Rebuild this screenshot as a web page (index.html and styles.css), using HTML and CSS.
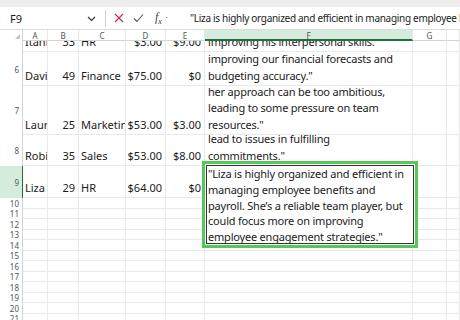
FILE: index.html
```html
<!DOCTYPE html>
<html lang="en">
<head>
    <meta charset="UTF-8">
    <title>Reviews - Sheet</title>
    <link rel="stylesheet" href="styles.css">
</head>
<body>
    <!-- formula bar -->
    <div class="formula-bar">
        <div class="name-box">
            <span>F9</span>
            <svg class="chev" width="9" height="6" viewBox="0 0 9 6"><path d="M1 1 L4.5 4.5 L8 1" fill="none" stroke="#333" stroke-width="1.2"/></svg>
        </div>
        <div class="divider"></div>
        <div class="bar-buttons">
            <svg width="10" height="10" viewBox="0 0 10 10"><path d="M1 1 L9 9 M9 1 L1 9" stroke="#c4314b" stroke-width="1.2"/></svg>
            <svg width="11" height="10" viewBox="0 0 11 10"><path d="M1 5.5 L4 8.5 L10 1.5" fill="none" stroke="#555" stroke-width="1.1"/></svg>
            <span class="fx"><i>f</i><sub>x</sub></span>
            <span class="fx-more">&#8901;</span>
        </div>
        <div class="formula">"Liza is highly organized and efficient in managing employee benefits and payroll. She’s a reliable team player, but could focus more on improving employee engagement strategies."</div>
    </div>

    <!-- sheet grid -->
    <div class="sheet">
        <div class="corner"></div><div class="col-head">A</div><div class="col-head">B</div><div class="col-head">C</div><div class="col-head">D</div><div class="col-head">E</div><div class="col-head active">F</div><div class="col-head">G</div><div class="col-head"></div>

        <div class="row-head"></div>
        <div class="cell"><span>Itani</span></div>
        <div class="cell num"><span>33</span></div>
        <div class="cell"><span>HR</span></div>
        <div class="cell num"><span>$3.00</span></div>
        <div class="cell num"><span>$9.00</span></div>
        <div class="cell wrap"><span>improving his interpersonal skills."</span></div>
        <div class="cell"></div><div class="cell"></div>

        <div class="row-head">6</div>
        <div class="cell"><span>Davi</span></div>
        <div class="cell num"><span>49</span></div>
        <div class="cell"><span>Finance</span></div>
        <div class="cell num"><span>$75.00</span></div>
        <div class="cell num"><span>$0</span></div>
        <div class="cell wrap"><span>improving our financial forecasts and<br>budgeting accuracy."</span></div>
        <div class="cell"></div><div class="cell"></div>

        <div class="row-head">7</div>
        <div class="cell"><span>Laur</span></div>
        <div class="cell num"><span>25</span></div>
        <div class="cell"><span>Marketing</span></div>
        <div class="cell num"><span>$53.00</span></div>
        <div class="cell num"><span>$3.00</span></div>
        <div class="cell wrap"><span>her approach can be too ambitious,<br>leading to some pressure on team<br>resources."</span></div>
        <div class="cell"></div><div class="cell"></div>

        <div class="row-head">8</div>
        <div class="cell"><span>Robi</span></div>
        <div class="cell num"><span>35</span></div>
        <div class="cell"><span>Sales</span></div>
        <div class="cell num"><span>$53.00</span></div>
        <div class="cell num"><span>$8.00</span></div>
        <div class="cell wrap"><span>lead to issues in fulfilling<br>commitments."</span></div>
        <div class="cell"></div><div class="cell"></div>

        <div class="row-head active">9</div>
        <div class="cell"><span>Liza</span></div>
        <div class="cell num"><span>29</span></div>
        <div class="cell"><span>HR</span></div>
        <div class="cell num"><span>$64.00</span></div>
        <div class="cell num"><span>$0</span></div>
        <div class="cell"></div>
        <div class="cell"></div><div class="cell"></div>

        <div class="row-head">10</div><div class="cell"></div><div class="cell"></div><div class="cell"></div><div class="cell"></div><div class="cell"></div><div class="cell"></div><div class="cell"></div><div class="cell"></div>
        <div class="row-head">11</div><div class="cell"></div><div class="cell"></div><div class="cell"></div><div class="cell"></div><div class="cell"></div><div class="cell"></div><div class="cell"></div><div class="cell"></div>
        <div class="row-head">12</div><div class="cell"></div><div class="cell"></div><div class="cell"></div><div class="cell"></div><div class="cell"></div><div class="cell"></div><div class="cell"></div><div class="cell"></div>
        <div class="row-head">13</div><div class="cell"></div><div class="cell"></div><div class="cell"></div><div class="cell"></div><div class="cell"></div><div class="cell"></div><div class="cell"></div><div class="cell"></div>
        <div class="row-head">14</div><div class="cell"></div><div class="cell"></div><div class="cell"></div><div class="cell"></div><div class="cell"></div><div class="cell"></div><div class="cell"></div><div class="cell"></div>
        <div class="row-head">15</div><div class="cell"></div><div class="cell"></div><div class="cell"></div><div class="cell"></div><div class="cell"></div><div class="cell"></div><div class="cell"></div><div class="cell"></div>
        <div class="row-head">16</div><div class="cell"></div><div class="cell"></div><div class="cell"></div><div class="cell"></div><div class="cell"></div><div class="cell"></div><div class="cell"></div><div class="cell"></div>
        <div class="row-head">17</div><div class="cell"></div><div class="cell"></div><div class="cell"></div><div class="cell"></div><div class="cell"></div><div class="cell"></div><div class="cell"></div><div class="cell"></div>
        <div class="row-head">18</div><div class="cell"></div><div class="cell"></div><div class="cell"></div><div class="cell"></div><div class="cell"></div><div class="cell"></div><div class="cell"></div><div class="cell"></div>
        <div class="row-head">19</div><div class="cell"></div><div class="cell"></div><div class="cell"></div><div class="cell"></div><div class="cell"></div><div class="cell"></div><div class="cell"></div><div class="cell"></div>
        <div class="row-head">20</div><div class="cell"></div><div class="cell"></div><div class="cell"></div><div class="cell"></div><div class="cell"></div><div class="cell"></div><div class="cell"></div><div class="cell"></div>
        <div class="row-head">21</div><div class="cell"></div><div class="cell"></div><div class="cell"></div><div class="cell"></div><div class="cell"></div><div class="cell"></div><div class="cell"></div><div class="cell"></div>
    </div>

    <!-- in-cell editor for F9, sits over the grid -->
    <div class="editor">
        <div class="editor-box">"Liza is highly organized and efficient in<br>managing employee benefits and<br>payroll. She’s a reliable team player, but<br>could focus more on improving<br>employee engagement strategies."</div>
    </div>
</body>
</html>
```

FILE: styles.css
```css
:root {
    --grid-line: #e9e9e9;
    --head-line: #d4d4d4;
    --select-green: #55c955;
    --head-green: #d5ecdc;
    --dark-green: #1f6e3f;
}

body {
    margin: 0;
    font-family: "Noto Sans", sans-serif;
    color: #1b1b1b;
    background: white;
    width: 460px;
    height: 320px;
    overflow: hidden;
    position: relative;
}

/* ---- formula bar ---- */
.formula-bar {
    height: 30px;
    box-sizing: border-box;
    border-top: 7px solid #eeeeee;
    border-bottom: 1px solid #dcdcdc;
    display: flex;
    align-items: center;
    font-size: 11px;
}

.name-box {
    width: 102px;
    display: flex;
    align-items: center;
    justify-content: space-between;
    padding: 0 6px 0 10px;
    box-sizing: border-box;
}

.chev {
    margin-top: 1px;
}

.divider {
    width: 1px;
    height: 17px;
    background: #d0d0d0;
    margin-left: 3px;
}

.bar-buttons {
    display: flex;
    align-items: center;
    gap: 9px;
    padding-left: 8px;
    width: 70px;
}

.fx {
    font-family: "Liberation Serif", serif;
    font-size: 12px;
    color: #444;
    margin-left: 2px;
}

.fx sub {
    font-size: 8px;
    font-style: italic;
}

.fx-more {
    color: #777;
    margin-left: -6px;
}

.formula {
    flex: 1;
    white-space: nowrap;
    overflow: hidden;
    padding-left: 6px;
    font-size: 10px;
    letter-spacing: -0.3px;
}

/* ---- sheet ---- */
.sheet {
    display: grid;
    grid-template-columns: 23px 25px 31px 47px 40px 39px 208px 34px 1fr;
    grid-template-rows: 11px 11px 34px 49px 31px 32px repeat(12, 10.5px);
    font-size: 11px;
}

.corner {
    position: relative;
    border-right: 1px solid var(--head-line);
}

.corner::after {
    content: "";
    position: absolute;
    right: 2px;
    bottom: 2px;
    border-left: 5px solid transparent;
    border-bottom: 5px solid #c4c4c4;
}

.col-head {
    font-size: 8px;
    color: #555;
    text-align: center;
    line-height: 11px;
    border-right: 1px solid var(--grid-line);
    border-bottom: 1px solid var(--head-line);
    box-sizing: border-box;
}

.col-head.active {
    background: var(--head-green);
    border-bottom: 2px solid var(--dark-green);
}

.row-head {
    font-size: 8px;
    color: #555;
    display: flex;
    align-items: center;
    justify-content: flex-end;
    padding-right: 3px;
    border-right: 1px solid var(--head-line);
}

.row-head.active {
    background: var(--head-green);
    border-right: 1px solid var(--dark-green);
}

.cell {
    border-right: 1px solid var(--grid-line);
    border-bottom: 1px solid var(--grid-line);
    box-sizing: border-box;
    overflow: hidden;
    display: flex;
    flex-direction: column;
    justify-content: flex-end;
    padding: 0 3px 1px 2px;
    line-height: 16.5px;
    white-space: nowrap;
}

.cell.num {
    align-items: flex-end;
}

.cell.wrap {
    padding-left: 3px;
    letter-spacing: -0.2px;
}

/* ---- editor overlay ---- */
.editor {
    position: absolute;
    left: 202px;
    top: 161px;
    width: 216px;
    height: 87px;
    box-sizing: border-box;
    border: 3px solid var(--select-green);
    background: white;
    padding: 1px;
}

.editor-box {
    height: 100%;
    box-sizing: border-box;
    border: 1px solid #333;
    padding-left: 1px;
    font-size: 11px;
    letter-spacing: -0.2px;
    line-height: 15.8px;
    white-space: nowrap;
    overflow: hidden;
}
```
